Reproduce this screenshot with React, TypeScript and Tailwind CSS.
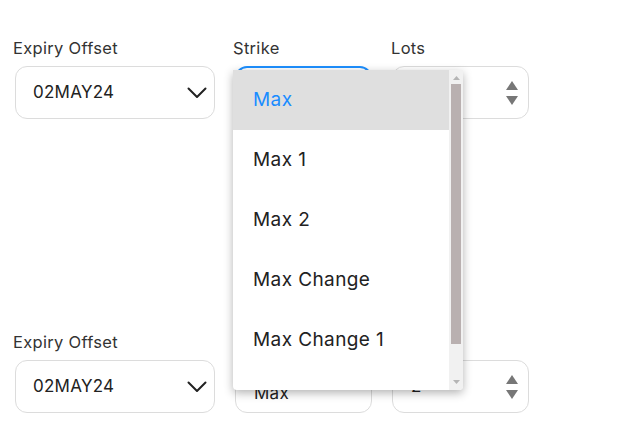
import { useState } from 'react';

const options = ['Max', 'Max 1', 'Max 2', 'Max Change', 'Max Change 1', 'Max Change 2'];

function Chevron() {
  return (
    <svg width="20" height="12" viewBox="0 0 20 12" fill="none">
      <path d="M1.5 1.5 L10 10 L18.5 1.5" stroke="#222" strokeWidth="2" strokeLinecap="round" strokeLinejoin="round" />
    </svg>
  );
}

function Spinner() {
  return (
    <div className="flex flex-col items-center gap-[6px]">
      <svg width="12" height="9" viewBox="0 0 12 9">
        <path d="M6 0 L12 9 L0 9 Z" fill="#777" />
      </svg>
      <svg width="12" height="9" viewBox="0 0 12 9">
        <path d="M0 0 L12 0 L6 9 Z" fill="#777" />
      </svg>
    </div>
  );
}

function Row({ focused, showMenu }: { focused?: boolean; showMenu?: boolean }) {
  const [active] = useState(0);
  return (
    <div className="flex gap-5 pl-[15px]">
      <div className="w-[200px]">
        <p className="-ml-0.5 text-[16.5px] leading-6 tracking-[0.3px] text-[#333]">Expiry Offset</p>
        <div className="mt-1.5 flex h-[53px] items-center justify-between rounded-xl border border-[#dcdcdc] bg-white pl-[17px] pr-[7px] text-[17px] tracking-[0.25px] text-[#222]">
          <span>02MAY24</span>
          <Chevron />
        </div>
      </div>
      <div className="relative w-[137px]">
        <p className="-ml-0.5 text-[16.5px] leading-6 tracking-[0.3px] text-[#333]">Strike</p>
        <div
          className={
            focused
              ? 'mt-1.5 flex h-[53px] items-center rounded-xl border-2 border-[#1e90ff] bg-white pl-[17px] text-[17px] tracking-[0.25px] text-[#222]'
              : 'mt-1.5 flex h-[53px] items-center rounded-xl border border-[#dcdcdc] bg-white pl-[18px] pt-[14px] text-[17px] tracking-[0.25px] text-[#222]'
          }
        >
          <span>Max</span>
        </div>
        {showMenu && (
          <div className="absolute left-[-2px] top-[34px] z-10 flex h-[320px] w-[230px] overflow-hidden rounded-b bg-white shadow-[0_3px_10px_rgba(0,0,0,0.3)]">
            <ul className="flex-1">
              {options.map((o, i) => (
                <li
                  key={o}
                  className={
                    i === active
                      ? 'flex h-[60px] items-center bg-[#dfdfdf] pl-[20px] text-[19px] tracking-[0.4px] text-[#1a8cff]'
                      : 'flex h-[60px] items-center pl-[20px] text-[19px] tracking-[0.4px] text-[#222]'
                  }
                >
                  {o}
                </li>
              ))}
            </ul>
            <div className="flex w-[14px] flex-col items-center bg-[#f1f1f1]">
              <svg className="mt-[6px]" width="7" height="4" viewBox="0 0 7 4">
                <path d="M3.5 0 L7 4 L0 4 Z" fill="#b5b5b5" />
              </svg>
              <div className="mt-[4px] h-[260px] w-[10px] bg-[#b9b0b0]" />
              <div className="flex-1" />
              <svg className="mb-[6px]" width="7" height="4" viewBox="0 0 7 4">
                <path d="M0 0 L7 0 L3.5 4 Z" fill="#b5b5b5" />
              </svg>
            </div>
          </div>
        )}
      </div>
      <div className="w-[137px]">
        <p className="-ml-px text-[16.5px] leading-6 tracking-[0.3px] text-[#333]">Lots</p>
        <div className="mt-1.5 flex h-[53px] items-center justify-between rounded-xl border border-[#dcdcdc] bg-white pl-[18px] pr-[10px] text-[17px] text-[#222]">
          <span>2</span>
          <Spinner />
        </div>
      </div>
    </div>
  );
}

export default function App() {
  return (
    <div className="h-[432px] w-[630px] bg-white pt-9 font-['Inter',sans-serif]">
      <Row focused showMenu />
      <div className="mt-[211px]">
        <Row />
      </div>
    </div>
  );
}
